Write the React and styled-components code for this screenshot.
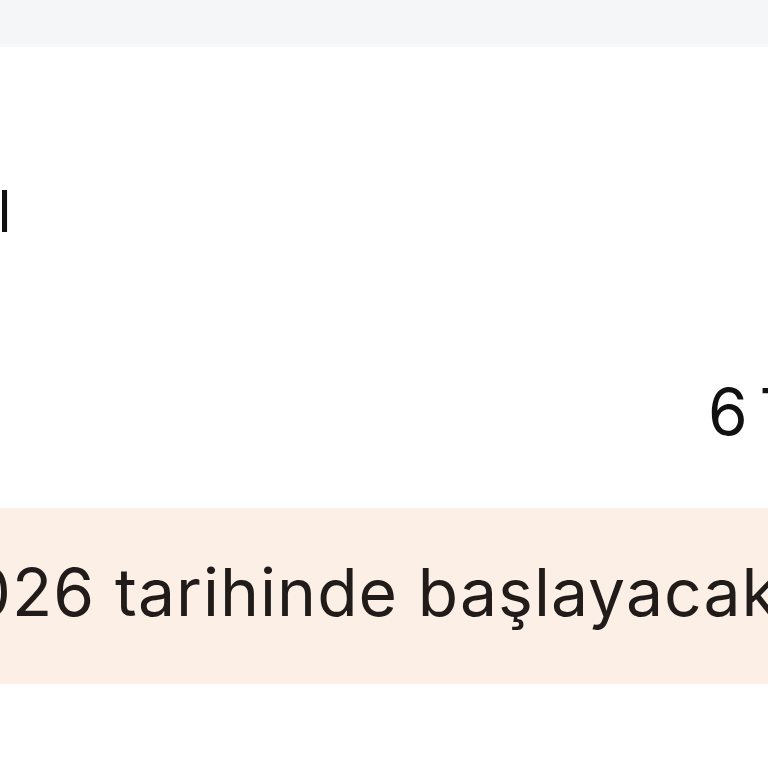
import React from "react";
import styled, { createGlobalStyle } from "styled-components";

const Global = createGlobalStyle`
  html, body { margin: 0; padding: 0; background: #ffffff; overflow: hidden; }
  body { font-family: Inter, "Noto Sans", "Liberation Sans", sans-serif; }
`;

const Page = styled.div`
  width: 768px;
  height: 768px;
  overflow: hidden;
  background: #ffffff;
`;

const TopBar = styled.header`
  height: 44px;
  background: #f5f6f8;
  border-bottom: 3px solid #f9f9fb;
`;

const Content = styled.main`
  width: 1800px;
  margin-left: -320px;
  display: flex;
  flex-direction: column;
`;

const SummaryRow = styled.div`
  display: grid;
  grid-template-columns: ${(p) => p.$lead}px 1fr;
  margin-top: ${(p) => p.$top}px;
  color: #111111;
  font-size: ${(p) => p.$size}px;
  line-height: 1;
  font-weight: 400;
  letter-spacing: -0.01em;
  white-space: nowrap;
`;

const Label = styled.span`
  text-align: ${(p) => p.$align || "left"};
`;

const Value = styled.span`
  text-align: left;
  word-spacing: -5px;
`;

const Notice = styled.section`
  margin-top: 64px;
  height: 176px;
  box-sizing: border-box;
  padding-top: 51px;
  background: #fcefe6;
  color: #211c19;
  font-size: 66px;
  line-height: 1;
  letter-spacing: 0.016em;
  white-space: nowrap;
`;

const NoticeLead = styled.span`
  display: inline-block;
  width: ${(p) => p.$width}px;
  text-align: right;
`;

export default function App() {
  return (
    <Page>
      <Global />
      <TopBar />
      <Content>
        <SummaryRow $lead={331} $top={135} $size={58}>
          <Label $align="right">Genel</Label>
          <Value />
        </SummaryRow>
        <SummaryRow $lead={1028} $top={140} $size={64}>
          <Label>Vade</Label>
          <Value>6 Taksit</Value>
        </SummaryRow>
        <Notice>
          <NoticeLead $width={332}>01.03.20</NoticeLead>26 tarihinde başlayacaktır.
        </Notice>
      </Content>
    </Page>
  );
}
